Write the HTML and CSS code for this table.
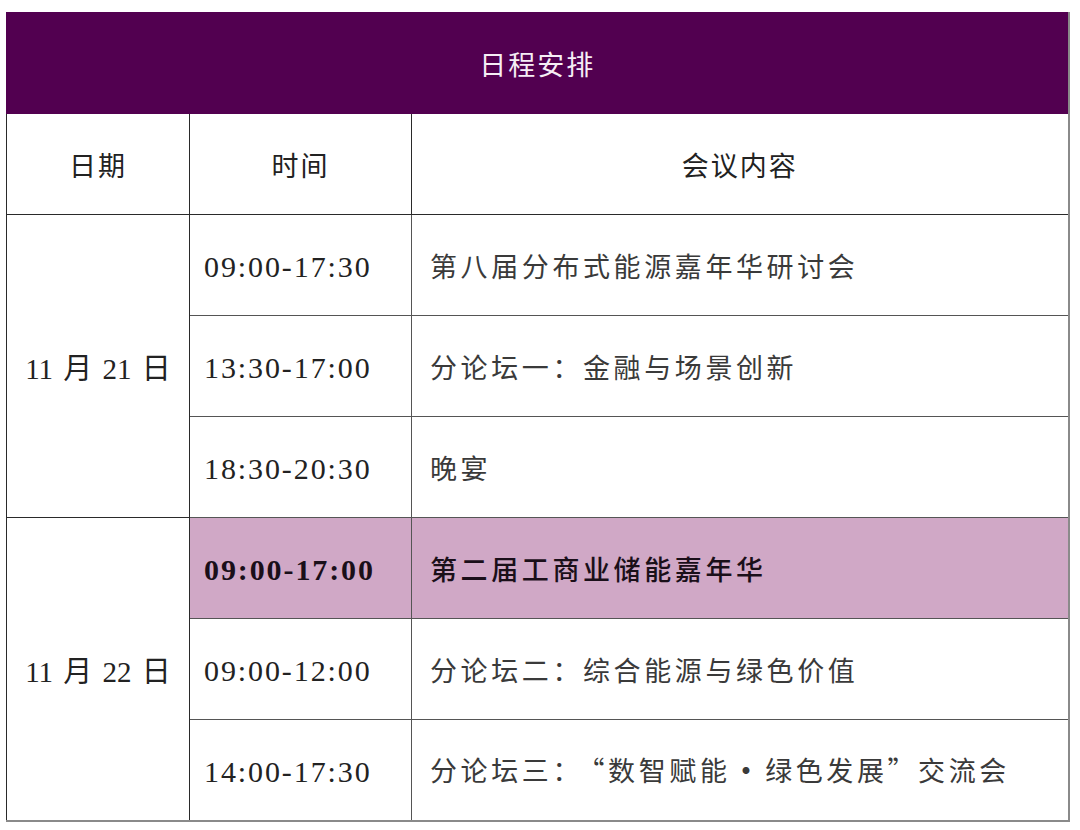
FILE: index.html
```html
<!DOCTYPE html>
<html lang="zh-CN">
<head>
<meta charset="utf-8">
<title>日程安排</title>
<link rel="stylesheet" href="styles.css">
</head>
<body>
<div class="page">
  <table class="schedule">
    <colgroup>
      <col class="c-date">
      <col class="c-time">
      <col class="c-topic">
    </colgroup>
    <thead>
      <tr class="title-row"><th colspan="3">日程安排</th></tr>
      <tr class="head-row"><th>日期</th><th>时间</th><th>会议内容</th></tr>
    </thead>
    <tbody>
      <tr>
        <td class="date" rowspan="3">11 月 21 日</td>
        <td class="time">09:00-17:30</td>
        <td class="topic">第八届分布式能源嘉年华研讨会</td>
      </tr>
      <tr>
        <td class="time">13:30-17:00</td>
        <td class="topic">分论坛一：金融与场景创新</td>
      </tr>
      <tr>
        <td class="time">18:30-20:30</td>
        <td class="topic">晚宴</td>
      </tr>
      <tr class="group-start">
        <td class="date" rowspan="3">11 月 22 日</td>
        <td class="time hl">09:00-17:00</td>
        <td class="topic hl">第二届工商业储能嘉年华</td>
      </tr>
      <tr>
        <td class="time">09:00-12:00</td>
        <td class="topic">分论坛二：综合能源与绿色价值</td>
      </tr>
      <tr>
        <td class="time">14:00-17:30</td>
        <td class="topic">分论坛三：<span class="q-open">“</span>数智赋能<span class="dot">·</span>绿色发展”交流会</td>
      </tr>
    </tbody>
  </table>
</div>
</body>
</html>
```
FILE: styles.css
```css
html, body {
  margin: 0;
  padding: 0;
  background: #ffffff;
}

.page {
  padding: 12px 0 0 6px;
}

.schedule {
  width: 1062px;
  border-collapse: collapse;
  table-layout: fixed;
  font-family: "Liberation Serif", "Noto Sans CJK SC", serif;
  color: #1e1e1e;
  border-right: 2px solid #8a8a8a;
  border-bottom: 2px solid #8a8a8a;
  border-left: 1px solid #555;
}

.c-date { width: 183px; }
.c-time { width: 222px; }
.c-topic { width: 657px; }

.schedule th,
.schedule td {
  height: 101px;
  padding: 0;
  border: 1px solid #2a2a2a;
  box-sizing: border-box;
}

.title-row th {
  background: #520050;
  color: #f6eef6;
  font-family: "Noto Sans CJK SC", sans-serif;
  font-weight: 400;
  font-size: 27px;
  letter-spacing: 2px;
  border-color: #520050;
  border-right: 2px solid #8a8a8a;
}

.head-row th {
  font-family: "Noto Sans CJK SC", sans-serif;
  font-weight: 400;
  font-size: 27px;
  letter-spacing: 2px;
  color: #222;
  border-top: none;
  text-align: center;
}

.date {
  text-align: center;
  font-size: 29px;
  word-spacing: 3px;
  color: #222;
}

.time {
  font-size: 30px;
  letter-spacing: 1.9px;
  padding-left: 14px !important;
  padding-top: 4px !important;
  color: #222;
}

.topic {
  font-family: "Noto Sans CJK SC", sans-serif;
  font-size: 27px;
  letter-spacing: 3.6px;
  padding-left: 18px !important;
  color: #3a3a3a;
}

.topic .dot {
  font-weight: 700;
  padding: 0 2px;
}

.topic .q-open {
  padding-left: 8px;
}

.schedule tbody td.time,
.schedule tbody td.topic {
  border-color: #555;
}

.hl {
  background: #d0a8c6;
  color: #1a0f19 !important;
  font-weight: 700;
}

.group-start td {
  border-top: 1px solid #2a2a2a;
}

.topic.hl {
  font-weight: 500;
}
```
